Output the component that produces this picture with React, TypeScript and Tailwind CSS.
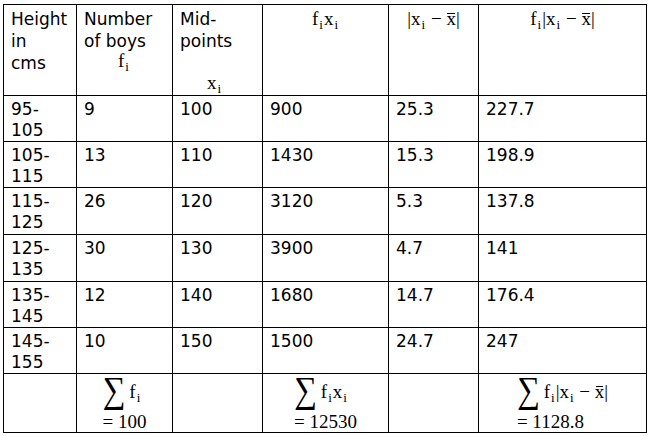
import React from "react";

const rows = [
  ["95-", "105", "9", "100", "900", "25.3", "227.7"],
  ["105-", "115", "13", "110", "1430", "15.3", "198.9"],
  ["115-", "125", "26", "120", "3120", "5.3", "137.8"],
  ["125-", "135", "30", "130", "3900", "4.7", "141"],
  ["135-", "145", "12", "140", "1680", "14.7", "176.4"],
  ["145-", "155", "10", "150", "1500", "24.7", "247"],
];

const rowHeights = ["h-[46px]", "h-[46px]", "h-[47px]", "h-[47px]", "h-[46px]", "h-[46px]"];

const serif = "font-['Liberation_Serif',serif]";

const Sub = ({ children }: { children: React.ReactNode }) => (
  <span className="text-[13px] relative top-[4px] leading-none mx-[1px]">{children}</span>
);

const Xbar = () => (
  <span className="relative">
    x
    <span className="absolute left-[1px] right-[1px] top-[5px] h-px bg-black" />
  </span>
);

// big n-ary sum, stretched to look like the display-style one
const Sigma = () => (
  <span className="inline-block text-[32px] leading-[30px] scale-y-[1.15] origin-top -mt-[4px] mr-[4px]">
    ∑
  </span>
);

const cell = "border border-black align-top pl-[7px] pt-[3px]";
const foot = `border border-black align-top text-center pt-[2px] ${serif} text-[19px]`;

export default function App() {
  return (
    <div className="bg-white w-[652px] h-[436px] pt-[4px] pl-[3px] text-black">
      <table className="table-fixed border-collapse w-[644px] font-['DejaVu_Sans',sans-serif] text-[17px] leading-[21px]">
        <colgroup>
          <col className="w-[73px]" />
          <col className="w-[96px]" />
          <col className="w-[90px]" />
          <col className="w-[126px]" />
          <col className="w-[90px]" />
          <col className="w-[168px]" />
        </colgroup>
        <tbody>
          <tr className="h-[91px]">
            <td className={`${cell} leading-[22px]`}>
              Height
              <br />
              in
              <br />
              cms
            </td>
            <td className={`${cell} leading-[22px]`}>
              Number
              <br />
              of boys
              <div className={`${serif} text-center text-[19px] pr-[8px] leading-[18px]`}>
                f<Sub>i</Sub>
              </div>
            </td>
            <td className={`${cell} leading-[22px] relative`}>
              Mid-
              <br />
              points
              <div className={`${serif} text-[19px] text-center pr-[6px] absolute bottom-[2px] left-0 right-0 leading-[20px]`}>
                x<Sub>i</Sub>
              </div>
            </td>
            <td className={`${cell} ${serif} text-[19px] text-center !pl-0`}>
              f<Sub>i</Sub>x<Sub>i</Sub>
            </td>
            <td className={`${cell} ${serif} text-[19px] text-center !pl-0`}>
              |x<Sub>i</Sub> − <Xbar />|
            </td>
            <td className={`${cell} ${serif} text-[19px] text-center !pl-0`}>
              f<Sub>i</Sub>|x<Sub>i</Sub> − <Xbar />|
            </td>
          </tr>
          {rows.map((r, i) => (
            <tr key={i} className={rowHeights[i]}>
              <td className={cell}>
                {r[0]}
                <br />
                {r[1]}
              </td>
              <td className={cell}>{r[2]}</td>
              <td className={cell}>{r[3]}</td>
              <td className={cell}>{r[4]}</td>
              <td className={cell}>{r[5]}</td>
              <td className={cell}>{r[6]}</td>
            </tr>
          ))}
          <tr className="h-[59px]">
            <td className="border border-black" />
            <td className={foot}>
              <div className="inline-block text-left">
                <div className="flex items-start h-[38px]">
                  <Sigma />
                  <span className="mt-[6px] leading-[20px]">
                    f<Sub>i</Sub>
                  </span>
                </div>
                <div className="leading-[16px]">= 100</div>
              </div>
            </td>
            <td className="border border-black" />
            <td className={foot}>
              <div className="inline-block text-left">
                <div className="flex items-start h-[38px]">
                  <Sigma />
                  <span className="mt-[6px] leading-[20px]">
                    f<Sub>i</Sub>x<Sub>i</Sub>
                  </span>
                </div>
                <div className="leading-[16px]">= 12530</div>
              </div>
            </td>
            <td className="border border-black" />
            <td className={foot}>
              <div className="inline-block text-left">
                <div className="flex items-start h-[38px]">
                  <Sigma />
                  <span className="mt-[6px] leading-[20px]">
                    f<Sub>i</Sub>|x<Sub>i</Sub> − <Xbar />|
                  </span>
                </div>
                <div className="leading-[16px]">= 1128.8</div>
              </div>
            </td>
          </tr>
        </tbody>
      </table>
    </div>
  );
}
